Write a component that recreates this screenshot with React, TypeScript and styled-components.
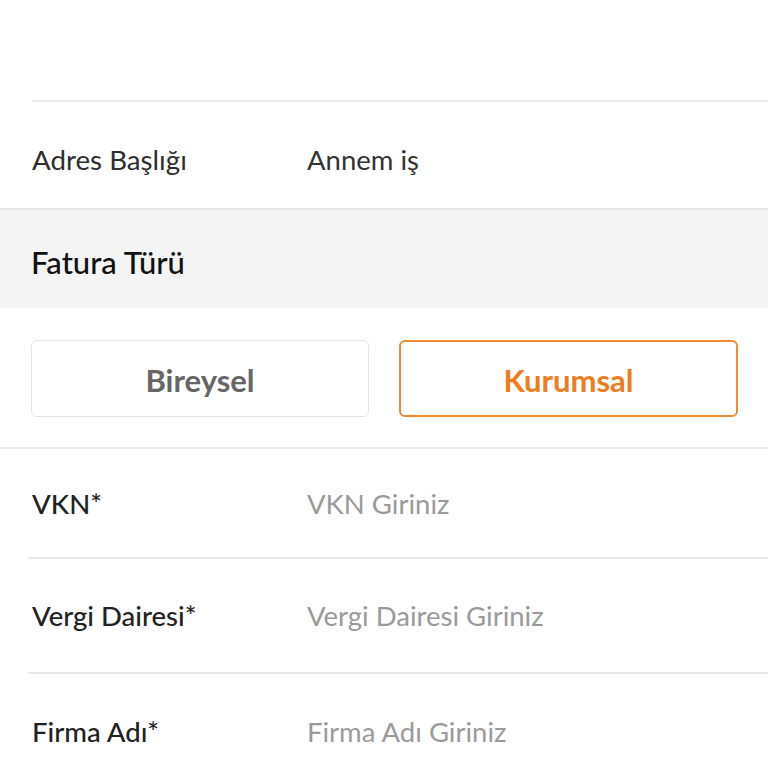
import React from "react";
import styled, { createGlobalStyle } from "styled-components";

const Global = createGlobalStyle`
  html, body { margin: 0; padding: 0; background: #fff; }
  body { font-family: Lato, "Noto Sans", sans-serif; }
`;

const Page = styled.div`
  width: 768px;
  height: 768px;
  overflow: hidden;
  background: #fff;
  display: flex;
  flex-direction: column;
`;

const TopSpace = styled.div`
  height: 102px;
  box-sizing: border-box;
  margin-left: 32px;
  border-bottom: 2px solid #e8e8e8;
  flex-shrink: 0;
`;

const Row = styled.div<{ $h: number; $inset?: boolean; $last?: boolean; $shift?: number }>`
  height: ${(p) => p.$h}px;
  flex-shrink: 0;
  display: flex;
  align-items: center;
  margin-left: ${(p) => (p.$inset ? 28 : 0)}px;
  padding-left: ${(p) => (p.$inset ? 4 : 32)}px;
  padding-top: ${(p) => p.$shift ?? 0}px;
  border-bottom: ${(p) => (p.$last ? "none" : "2px solid #e8e8e8")};
  box-sizing: border-box;
`;

const Label = styled.div<{ $bold?: boolean }>`
  width: 275px;
  font-size: ${(p) => (p.$bold ? 27.5 : 27.7)}px;
  color: ${(p) => (p.$bold ? "#222" : "#2e2e2e")};
  font-weight: ${(p) => (p.$bold ? 500 : 400)};
`;

const Value = styled.div<{ $placeholder?: boolean }>`
  font-size: 27.5px;
  color: ${(p) => (p.$placeholder ? "#9a9a9a" : "#333")};
`;

const Section = styled.div`
  height: 98px;
  flex-shrink: 0;
  box-sizing: border-box;
  padding-top: 5px;
  background: #f4f4f4;
  display: flex;
  align-items: center;
  padding-left: 31px;
  font-size: 31px;
  font-weight: 500;
  color: #111;
`;

const ButtonBar = styled.div`
  height: 141px;
  flex-shrink: 0;
  box-sizing: border-box;
  border-bottom: 2px solid #e8e8e8;
  display: grid;
  grid-template-columns: 338px 339px;
  column-gap: 30px;
  padding: 32px 0 0 31px;
  align-content: start;
`;

const Choice = styled.div<{ $active?: boolean }>`
  height: 77px;
  box-sizing: border-box;
  border-radius: 6px;
  border: ${(p) => (p.$active ? "2px solid #ef8a35" : "1px solid #e3e3e3")};
  display: flex;
  align-items: center;
  justify-content: center;
  padding-top: 3px;
  font-size: 31px;
  font-weight: 700;
  color: ${(p) => (p.$active ? "#ee7d22" : "#666")};
`;

export default function App() {
  return (
    <Page>
      <Global />
      <TopSpace />
      <Row $h={108} $shift={8}>
        <Label>Adres Başlığı</Label>
        <Value>Annem iş</Value>
      </Row>
      <Section>Fatura Türü</Section>
      <ButtonBar>
        <Choice>Bireysel</Choice>
        <Choice $active>Kurumsal</Choice>
      </ButtonBar>
      <Row $h={110} $inset>
        <Label $bold>VKN*</Label>
        <Value $placeholder>VKN Giriniz</Value>
      </Row>
      <Row $h={115} $inset>
        <Label $bold>Vergi Dairesi*</Label>
        <Value $placeholder>Vergi Dairesi Giriniz</Value>
      </Row>
      <Row $h={114} $inset $last>
        <Label $bold>Firma Adı*</Label>
        <Value $placeholder>Firma Adı Giriniz</Value>
      </Row>
    </Page>
  );
}
